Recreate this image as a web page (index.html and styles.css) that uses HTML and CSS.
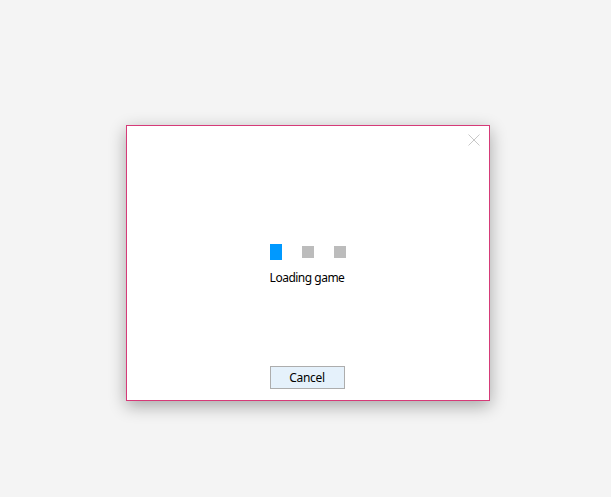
FILE: index.html
```html
<!DOCTYPE html>
<html lang="en">
<head>
  <meta charset="UTF-8" />
  <title>Loading game</title>
  <link rel="stylesheet" href="styles.css">
</head>
<body>

  <div class="dialog">
    <span class="dialog-close">
      <svg width="12" height="12" viewBox="0 0 12 12">
        <path d="M0.5 0.5 L11.5 11.5 M11.5 0.5 L0.5 11.5" stroke="#c8c8c8" stroke-width="1" fill="none"/>
      </svg>
    </span>

    <div class="loader">
      <div class="dot active"></div>
      <div class="dot"></div>
      <div class="dot"></div>
    </div>
    <p class="loading-text">Loading game</p>

    <div class="spacer"></div>

    <button class="cancel-btn">Cancel</button>
  </div>

</body>
</html>
```

FILE: styles.css
```css
html {
  height: 100%;
  background: #f4f4f4;
}

body {
  box-sizing: border-box;
  min-height: 100%;
  margin: 0;
  padding: 125px 0 0 126px;
  background: #f4f4f4;
  font-family: "Noto Sans", "Open Sans", sans-serif;
  font-size: 12px;
  color: #000;
}

.dialog {
  position: relative;
  box-sizing: border-box;
  width: 364px;
  height: 276px;
  background: white;
  border: 1px solid #d63a78;
  box-shadow: 0 5px 16px rgba(0,0,0,0.32);
  display: flex;
  flex-direction: column;
  align-items: center;
  padding: 118px 2px 11px 0;
}

.dialog-close {
  position: absolute;
  top: 8px;
  right: 9px;
  width: 12px;
  height: 12px;
  cursor: pointer;
}

.dialog-close svg {
  display: block;
}

.loader {
  display: flex;
  align-items: center;
  gap: 20px;
  height: 16px;
  margin-left: 1px;
}

.dot {
  width: 12px;
  height: 12px;
  background: #bcbcbc;
}

.dot.active {
  height: 16px;
  background: #0099ff;
}

.loading-text {
  margin: 10px 0 0 0;
  line-height: 16px;
  letter-spacing: -0.5px;
}

.spacer {
  flex: 1;
}

.cancel-btn {
  box-sizing: border-box;
  width: 75px;
  height: 23px;
  padding: 0;
  background: #e5f1fb;
  border: 1px solid #adadad;
  font-family: inherit;
  font-size: 12px;
  letter-spacing: -0.3px;
  color: #000;
  cursor: pointer;
}
```
